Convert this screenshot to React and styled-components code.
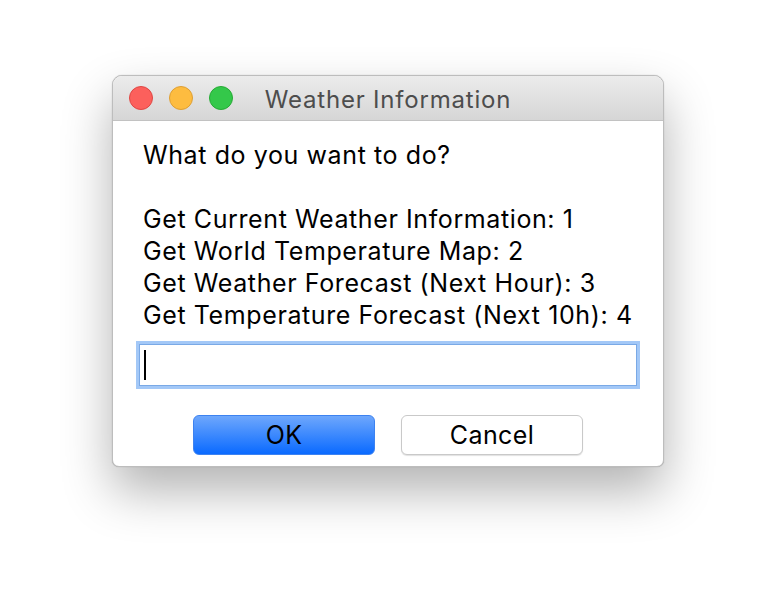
import styled, { createGlobalStyle } from 'styled-components';

const GlobalStyle = createGlobalStyle`
  html, body {
    margin: 0;
    background: #ffffff;
  }
  body {
    font-family: Inter, "Liberation Sans", sans-serif;
  }
`;

const Page = styled.div`
  width: 776px;
  height: 616px;
  padding: 75px 0 0 112px;
  box-sizing: border-box;
`;

const Window = styled.div`
  width: 552px;
  box-sizing: border-box;
  background: #ffffff;
  border: 1px solid #bdbdbd;
  border-radius: 10px 10px 7px 7px;
  overflow: hidden;
  display: flex;
  flex-direction: column;
  box-shadow: 0 24px 50px rgba(0, 0, 0, 0.3), 0 0 1px rgba(0, 0, 0, 0.3);
`;

const TitleBar = styled.div`
  height: 44px;
  flex: none;
  position: relative;
  display: flex;
  align-items: center;
  justify-content: center;
  background: linear-gradient(#ececec, #d6d6d6);
  border-bottom: 1px solid #c2c2c2;
`;

const Lights = styled.div`
  position: absolute;
  left: 16px;
  top: 10px;
  display: flex;
  gap: 16px;
`;

const Light = styled.span`
  width: 24px;
  height: 24px;
  border-radius: 50%;
  background: ${p => p.$fill};
  border: 1px solid ${p => p.$edge};
  box-sizing: border-box;
`;

const Title = styled.div`
  font-size: 24px;
  color: #4d4d4d;
  letter-spacing: 0.8px;
  margin-top: 2px;
`;

const Content = styled.div`
  padding: 18px 23px 11px 23px;
  display: flex;
  flex-direction: column;
`;

const Message = styled.div`
  padding-left: 7px;
  font-size: 25px;
  letter-spacing: 0.6px;
  line-height: 32px;
  color: #000000;
`;

const Line = styled.div`
  min-height: 32px;
`;

const Field = styled.div`
  margin-top: 10px;
  height: 48px;
  flex: none;
  box-sizing: border-box;
  border: 3px solid #a3c8f7;
  display: flex;
  align-items: center;
  padding-left: 5px;
  position: relative;
  &::before {
    content: '';
    position: absolute;
    inset: 0;
    border: 1px solid #7aa9e6;
  }
`;

const Caret = styled.span`
  width: 2px;
  height: 30px;
  background: #000;
`;

const Buttons = styled.div`
  margin-top: 26px;
  display: flex;
  justify-content: center;
  gap: 26px;
`;

const Button = styled.button`
  width: 182px;
  height: 40px;
  border-radius: 6px;
  font-family: Inter, "Liberation Sans", sans-serif;
  font-size: 25px;
  letter-spacing: 0.4px;
  color: #000;
  cursor: pointer;
  padding: 0;
  background: ${p => (p.$primary ? 'linear-gradient(#6ea7fc, #0a6aff)' : '#ffffff')};
  border: 1px solid ${p => (p.$primary ? '#3d82f0' : '#c9c9c9')};
  box-shadow: ${p => (p.$primary ? 'none' : '0 1px 1px rgba(0,0,0,0.12)')};
`;

const lines = [
  'What do you want to do?',
  '',
  'Get Current Weather Information: 1',
  'Get World Temperature Map: 2',
  'Get Weather Forecast (Next Hour): 3',
  'Get Temperature Forecast (Next 10h): 4',
];

export default function App() {
  return (
    <Page>
      <GlobalStyle />
      <Window>
        <TitleBar>
          <Lights>
            <Light $fill="#fc605c" $edge="#df4744" />
            <Light $fill="#fdbc40" $edge="#de9f34" />
            <Light $fill="#34c84a" $edge="#27aa35" />
          </Lights>
          <Title>Weather Information</Title>
        </TitleBar>
        <Content>
          <Message>
            {lines.map((l, i) => (
              <Line key={i}>{l}</Line>
            ))}
          </Message>
          <Field>
            <Caret />
          </Field>
          <Buttons>
            <Button $primary>OK</Button>
            <Button>Cancel</Button>
          </Buttons>
        </Content>
      </Window>
    </Page>
  );
}
